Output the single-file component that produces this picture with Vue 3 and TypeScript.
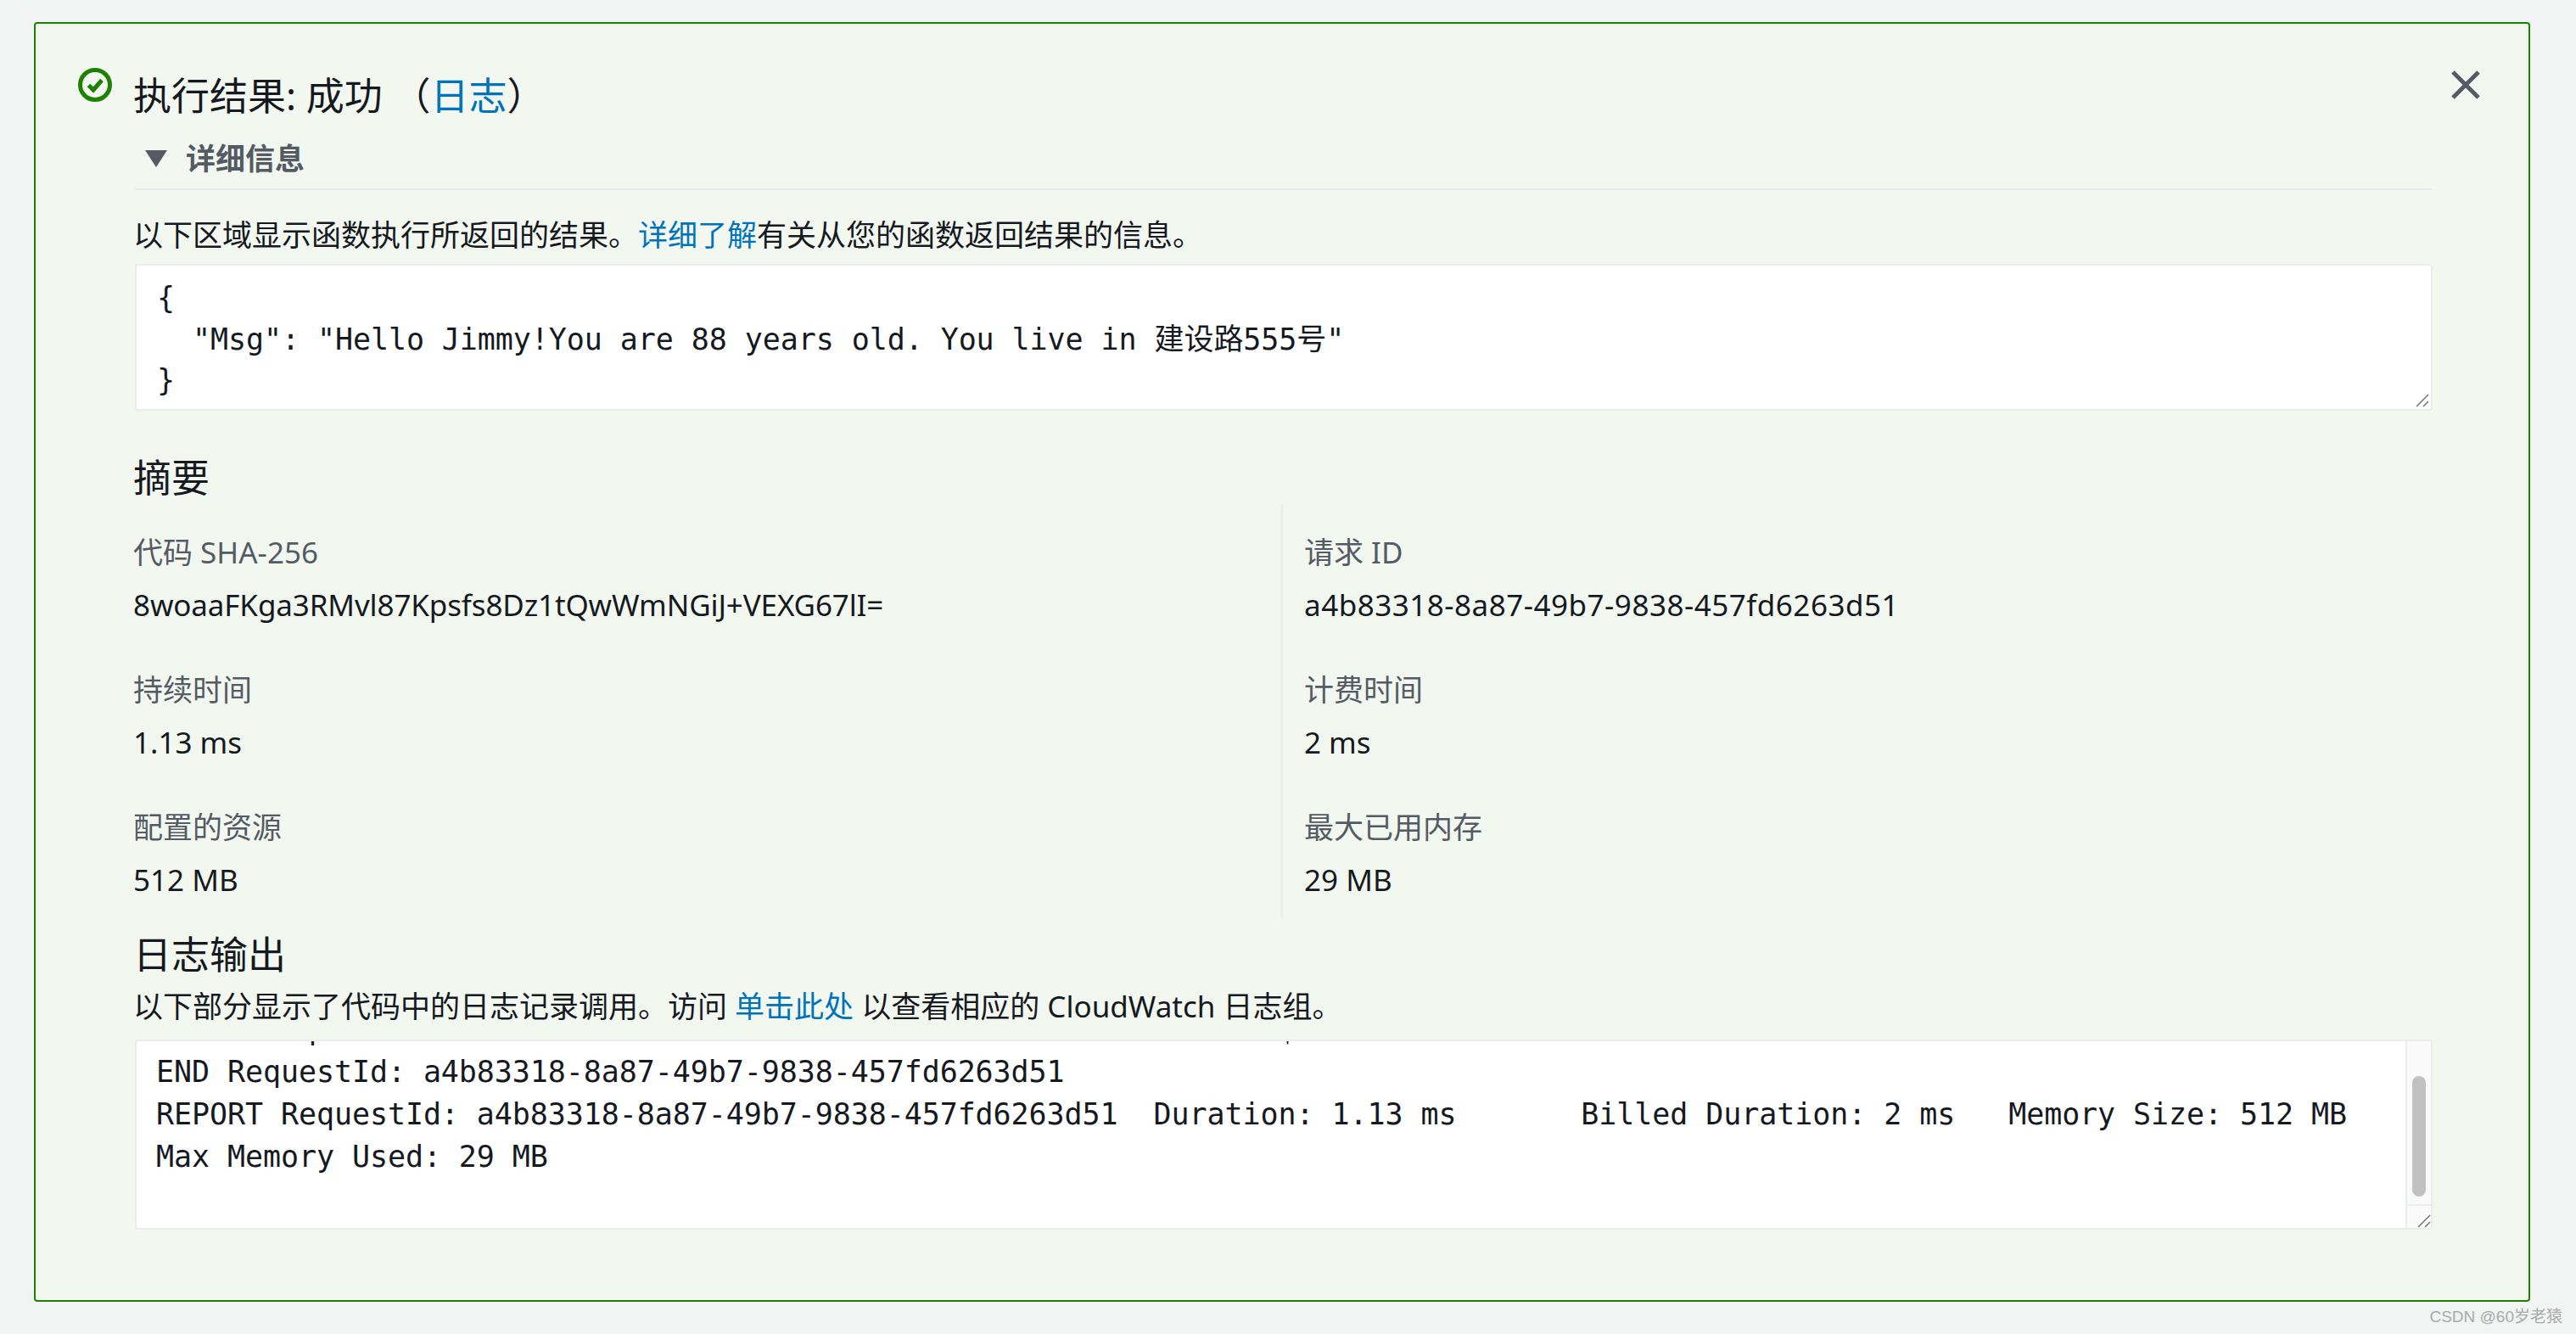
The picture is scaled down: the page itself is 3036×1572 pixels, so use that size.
<script setup lang="ts">
interface Item { label: string; value: string; tracking?: 'tight' | 'wide' }
const items: Item[] = [
  { label: '代码 SHA-256', value: '8woaaFKga3RMvl87Kpsfs8Dz1tQwWmNGiJ+VEXG67lI=', tracking: 'tight' },
  { label: '请求 ID', value: 'a4b83318-8a87-49b7-9838-457fd6263d51', tracking: 'wide' },
  { label: '持续时间', value: '1.13 ms' },
  { label: '计费时间', value: '2 ms' },
  { label: '配置的资源', value: '512 MB' },
  { label: '最大已用内存', value: '29 MB' },
]
const result = '{\n  "Msg": "Hello Jimmy!You are 88 years old. You live in 建设路555号"\n}'
const log = [
  'START RequestId: a4b83318-8a87-49b7-9838-457fd6263d51 Version: $LATEST',
  'END RequestId: a4b83318-8a87-49b7-9838-457fd6263d51',
  'REPORT RequestId: a4b83318-8a87-49b7-9838-457fd6263d51\tDuration: 1.13 ms\tBilled Duration: 2 ms\tMemory Size: 512 MB',
  'Max Memory Used: 29 MB',
].join('\n')
</script>

<template>
  <div class="page">
    <section class="card">
      <svg class="status" viewBox="0 0 40 40" aria-hidden="true">
        <circle cx="20" cy="20" r="17.5" fill="none" stroke="#1d8102" stroke-width="5" />
        <path d="M12.5 20.5 L18 26 L28 14.5" fill="none" stroke="#1d8102" stroke-width="5" />
      </svg>
      <div class="body">
        <h2 class="title">执行结果: 成功 （<a class="link">日志</a>）</h2>
        <div class="details">
          <span class="triangle"></span>
          <span>详细信息</span>
        </div>
        <p class="para first">以下区域显示函数执行所返回的结果。<a class="link">详细了解</a>有关从您的函数返回结果的信息。</p>
        <div class="box result">
          <pre class="mono">{{ result }}</pre>
          <svg class="grip" viewBox="0 0 16 16" aria-hidden="true">
            <path d="M1 15 L15 1 M9 15 L15 9" stroke="#6a6a6a" stroke-width="1.4" fill="none" />
          </svg>
        </div>
        <h3 class="heading summary">摘要</h3>
        <div class="grid">
          <div v-for="item in items" :key="item.label" class="kv">
            <div class="label">{{ item.label }}</div>
            <div class="value" :class="item.tracking">{{ item.value }}</div>
          </div>
        </div>
        <h3 class="heading logs">日志输出</h3>
        <p class="para logtext">以下部分显示了代码中的日志记录调用。访问 <a class="link">单击此处</a> 以查看相应的 CloudWatch 日志组。</p>
        <div class="box logbox">
          <div class="logview">
            <pre class="mono logpre">{{ log }}</pre>
          </div>
          <div class="scrollbar">
            <div class="track"><div class="thumb"></div></div>
            <div class="corner">
              <svg class="grip" viewBox="0 0 16 16" aria-hidden="true">
                <path d="M1 15 L15 1 M9 15 L15 9" stroke="#6a6a6a" stroke-width="1.4" fill="none" />
              </svg>
            </div>
          </div>
        </div>
      </div>
      <svg class="close" viewBox="0 0 34 34" aria-hidden="true">
        <path d="M2 2 L32 32 M32 2 L2 32" stroke="#545b64" stroke-width="5" fill="none" />
      </svg>
    </section>
    <div class="mark">CSDN @60岁老猿</div>
  </div>
</template>

<style>
html, body { margin: 0; background: #f2f3f3; }
</style>

<style scoped>
.page {
  position: relative;
  box-sizing: border-box;
  width: 3036px;
  height: 1572px;
  padding: 26px 54px 0 40px;
  background: #f2f3f3;
  font-family: "Noto Sans", "Noto Sans CJK SC", sans-serif;
  font-size: 35px;
  line-height: 50px;
  color: #16191f;
}
.card {
  box-sizing: border-box;
  display: flex;
  align-items: flex-start;
  width: 2942px;
  height: 1508px;
  padding: 52px 0 0 50px;
  border: 2px solid #1d8102;
  border-radius: 4px;
  background: #f2f8f0;
}
.status { width: 40px; height: 40px; flex: none; margin-right: 27px; }
.body { width: 2708px; flex: none; }
.close { width: 34px; height: 34px; flex: none; margin: 3px 0 0 22px; }
.link { color: #0073bb; }
.title { margin: 0 0 0 -2px; font-size: 45px; font-weight: 400; line-height: 66px; }
.details {
  display: flex;
  align-items: center;
  gap: 22px;
  padding: 16px 0 10px 12px;
  border-bottom: 2px solid #eaeded;
  font-weight: 700;
  font-size: 35px;
  color: #545b64;
}
.triangle {
  width: 0;
  height: 0;
  border-left: 13px solid transparent;
  border-right: 13px solid transparent;
  border-top: 20px solid #545b64;
}
.para { margin: 0 0 0 -2px; }
.para.first { margin-top: 28px; }
.box {
  position: relative;
  box-sizing: border-box;
  border: 2px solid #eaeded;
  border-radius: 4px;
  background: #fff;
  overflow: hidden;
}
.mono {
  margin: 0;
  font-family: "DejaVu Sans Mono", "Noto Sans CJK SC", monospace;
  font-size: 35px;
  line-height: 50px;
  letter-spacing: -0.08px;
  tab-size: 8;
  color: #16191f;
}
.result { margin-top: 9px; height: 173px; padding: 14px 0 0 24px; }
.result .mono { line-height: 48.5px; }
.result > .grip { position: absolute; right: 2px; bottom: 2px; }
.grip { width: 16px; height: 16px; display: block; }
.heading { margin: 0 0 0 -2px; font-size: 45px; font-weight: 400; line-height: 60px; }
.heading.summary { margin-top: 49px; }
.grid {
  display: grid;
  grid-template-columns: 1351px 1fr;
  grid-auto-rows: 115px;
  row-gap: 47px;
  margin-top: 2px;
  padding: 28px 0 21px;
  background: linear-gradient(#eaeded, #eaeded) 1351px 0 / 2px 100% no-repeat;
}
.kv:nth-child(odd) { margin-left: -2px; }
.kv:nth-child(even) { padding-left: 27px; }
.label { color: #545b64; position: relative; top: 3px; }
.value { margin-top: 15px; }
.value.wide { letter-spacing: 0.5px; }
.value.tight { letter-spacing: -0.13px; }
.heading.logs { margin-top: 12px; }
.para.logtext { margin-top: 6px; }
.logbox { margin-top: 14px; height: 224px; display: flex; }
.logview { flex: 1; min-width: 0; overflow: hidden; padding-left: 23px; }
.logpre { margin-top: -39px; }
.scrollbar {
  flex: none;
  width: 28px;
  display: flex;
  flex-direction: column;
  border-left: 2px solid #eaeded;
  background: #fafafa;
}
.track { flex: 1; padding: 41px 6px 0 6px; box-sizing: border-box; }
.thumb { height: 142px; border-radius: 8px; background: #c1c1c1; }
.corner {
  position: relative;
  height: 28px;
  border-top: 2px solid #eaeded;
  box-sizing: border-box;
}
.corner .grip { position: absolute; right: 0; bottom: 0; }
.mark {
  position: absolute;
  right: 16px;
  bottom: 8px;
  font-size: 19px;
  line-height: 24px;
  color: #aaaaaa;
  font-family: "Liberation Sans", "Noto Sans CJK SC", sans-serif;
}
</style>
